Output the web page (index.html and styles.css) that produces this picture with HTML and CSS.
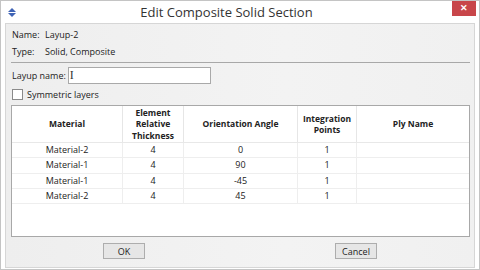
FILE: index.html
```html
<!DOCTYPE html>
<html lang="en">
<head>
    <meta charset="UTF-8">
    <title>Edit Composite Solid Section</title>
    <link rel="stylesheet" href="styles.css">
</head>
<body>
    <div class="window">
        <div class="titlebar">
            <svg class="app-icon" width="8" height="9" viewBox="0 0 8 9">
                <polygon points="4,0 8,4 0,4" fill="#3f63b5"/>
                <polygon points="0,5 8,5 4,9" fill="#3f63b5"/>
            </svg>
            <div class="title">Edit Composite Solid Section</div>
            <button class="close-btn">✕</button>
        </div>

        <div class="panel">
            <div class="info">
                <div class="info-row"><span class="label">Name:</span><span>Layup-2</span></div>
                <div class="info-row"><span class="label">Type:</span><span>Solid, Composite</span></div>
            </div>
            <div class="sep"></div>

            <div class="field">
                <label>Layup name:</label>
                <div class="input"><span class="caret">I</span></div>
            </div>
            <div class="check">
                <span class="box"></span>
                <span>Symmetric layers</span>
            </div>

            <div class="table-box">
                <table>
                    <thead>
                        <tr>
                            <th class="c1">Material</th>
                            <th class="c2">Element Relative Thickness</th>
                            <th class="c3">Orientation Angle</th>
                            <th class="c4">Integration Points</th>
                            <th class="c5">Ply Name</th>
                        </tr>
                    </thead>
                    <tbody>
                        <tr><td>Material-2</td><td>4</td><td>0</td><td>1</td><td></td></tr>
                        <tr><td>Material-1</td><td>4</td><td>90</td><td>1</td><td></td></tr>
                        <tr><td>Material-1</td><td>4</td><td>-45</td><td>1</td><td></td></tr>
                        <tr><td>Material-2</td><td>4</td><td>45</td><td>1</td><td></td></tr>
                    </tbody>
                </table>
            </div>

            <div class="buttons">
                <button class="btn ok">OK</button>
                <button class="btn cancel">Cancel</button>
            </div>
        </div>
    </div>
</body>
</html>
```

FILE: styles.css
```css
body {
    margin: 0;
    padding: 0;
    font-family: "Open Sans", "Noto Sans", sans-serif;
    font-size: 9px;
    color: #222;
    background: #fff;
}
.window {
    width: 480px;
    height: 270px;
    box-sizing: border-box;
    border: 1px solid #c4c4c4;
    background: #fff;
    display: flex;
    flex-direction: column;
}
.titlebar {
    height: 22px;
    display: flex;
    align-items: flex-start;
}
.app-icon {
    margin: 7px 0 0 7px;
}
.title {
    flex: 1;
    text-align: center;
    font-size: 13px;
    line-height: 23px;
    color: #333;
    padding-right: 15px;
}
.close-btn {
    width: 24px;
    height: 15px;
    margin-right: 3px;
    border: none;
    background: #c8464a;
    color: #fff;
    font-size: 9px;
    font-weight: bold;
    padding: 0;
    line-height: 15px;
}
.panel {
    flex: 1;
    margin: 0 4px 1px 4px;
    border: 1px solid #d6d6d6;
    background: linear-gradient(to right, #eeeeee, #f3f3f3 60%, #f0f0f0);
    padding: 0 4px 0 5px;
    display: flex;
    flex-direction: column;
}
.info {
    padding: 2px 0 0 1px;
}
.info-row {
    height: 17px;
    line-height: 17px;
    display: flex;
}
.label {
    width: 33px;
}
.sep {
    height: 1px;
    background: #a8a8a8;
    margin: 2px 0 4px 0;
}
.field {
    display: flex;
    align-items: center;
    height: 17px;
    padding-left: 1px;
}
.input {
    width: 141px;
    height: 15px;
    margin-left: 2px;
    border: 1px solid #a9a9a9;
    background: #fff;
    position: relative;
}
.caret {
    position: absolute;
    left: 1px;
    top: 0;
    font-family: "Liberation Serif", serif;
    font-size: 12px;
    line-height: 15px;
    color: #333;
}
.check {
    display: flex;
    align-items: center;
    height: 14px;
    margin-top: 3px;
    padding-left: 1px;
}
.box {
    width: 9px;
    height: 9px;
    border: 1px solid #8a8a8a;
    background: #fff;
    margin-right: 4px;
}
.table-box {
    margin-top: 4px;
    height: 130px;
    border: 1px solid #a8a8a8;
    background: #fff;
}
table {
    width: 100%;
    border-collapse: collapse;
    table-layout: fixed;
}
th {
    font-size: 8.5px;
    font-weight: bold;
    height: 36px;
    padding: 0 3px;
    line-height: 11.5px;
    border-right: 1px solid #e6e6e6;
    border-bottom: 1px solid #e8e8e8;
}
th:last-child {
    border-right: none;
}
td {
    height: 14.3px;
    padding: 0;
    text-align: center;
    line-height: 14px;
    border-right: 1px solid #eeeeee;
    border-bottom: 1px solid #eeeeee;
}
td:last-child {
    border-right: none;
}
.c1 { width: 104px; }
.c2 { width: 54px; }
.c3 { width: 107px; }
.c4 { width: 52px; }
.buttons {
    display: flex;
    padding: 6px 0 0 92px;
}
.btn {
    width: 42px;
    height: 16px;
    padding: 0;
    font-family: "Open Sans", "Noto Sans", sans-serif;
    font-size: 9px;
    background: #e6e6e6;
    border: 1px solid #adadad;
    color: #222;
}
.cancel {
    margin-left: 190px;
}
```
